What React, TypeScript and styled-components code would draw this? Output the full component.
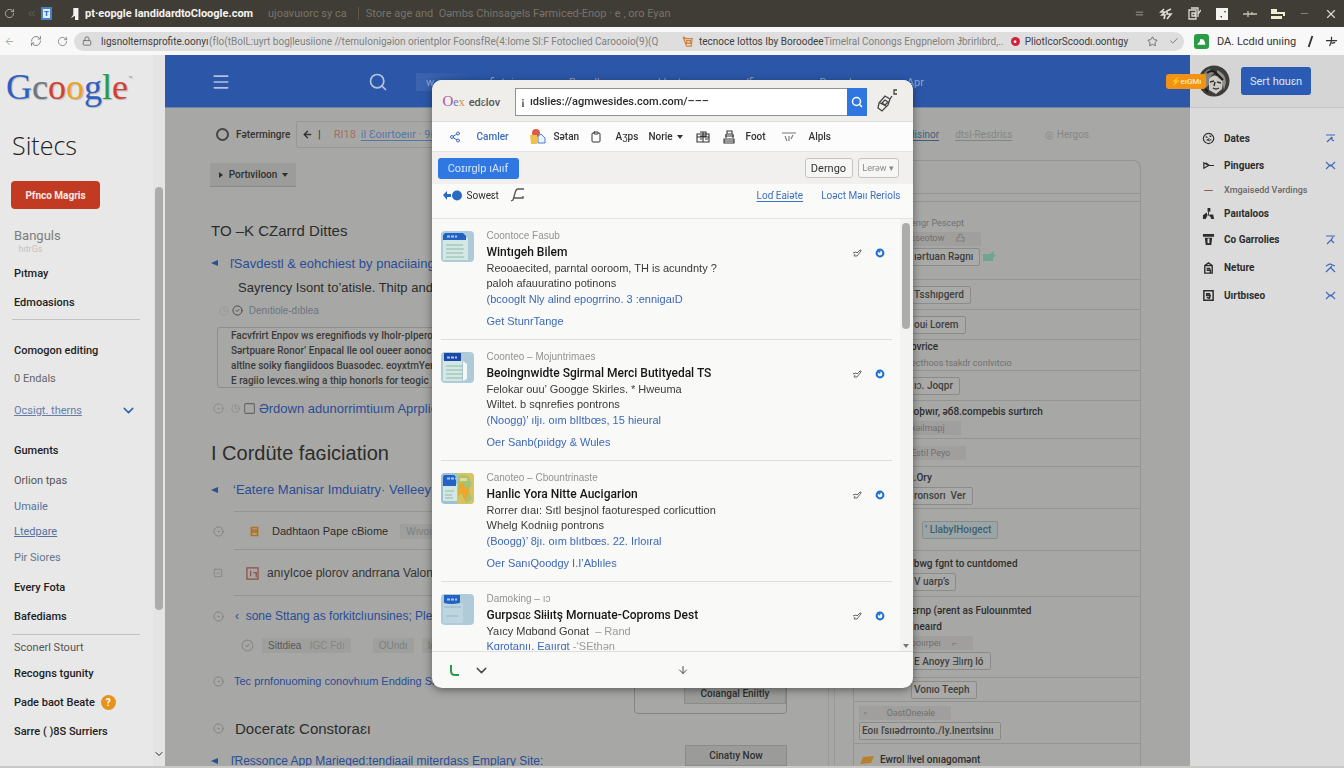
import React from 'react';
import styled, { createGlobalStyle } from 'styled-components';
import {
  Search, Menu, ChevronDown, Share2, Clipboard, X, Minus, Equal,
  RotateCw, RefreshCw, Lock, Star, Check,
  CircleDot, ArrowDown, ArrowLeft, Clock, ChevronsLeft,
  CircleCheck, SquareCheck, Square,
} from 'lucide-react';

const Global = createGlobalStyle`
  * { box-sizing: border-box; }
  html, body { margin: 0; height: 100%; overflow: hidden; }
  body { font-family: Roboto, "Liberation Sans", Arial, sans-serif; font-size: 11px; color: #2b2b2b; background: #a7a8a6; }
  button, input { font: inherit; margin: 0; }
  a { color: inherit; text-decoration: none; }
  h1, h2, h3, p, ul { margin: 0; padding: 0; font-weight: 400; }
  ul { list-style: none; }
  svg { flex: none; display: block; }
`;

const Page = styled.div`
  display: flex;
  flex-direction: column;
  height: 100vh;
  overflow: hidden;
  border-bottom: 2px solid #c9c9c7;
  white-space: nowrap;
`;
const Space = styled.span<{ $w: number }>`
  flex: none;
  width: ${p => p.$w}px;
`;

/* ---------- window chrome ---------- */
const TitleBar = styled.header`
  display: flex;
  align-items: center;
  flex: none;
  height: 27px;
  padding: 0 6px 0 4px;
  background: #403d36;
  color: #b3b0a6;
`;
const AppMark = styled.span`
  display: grid;
  place-items: center;
  width: 11px;
  height: 13px;
  margin: 0 17px 0 4px;
  background: #e4edf8;
  border: 2px solid #4382cc;
  color: #1d62bd;
  font-size: 8px;
  font-weight: 700;
`;
const WindowTitle = styled.strong`
  width: 174px;
  margin-left: 4px;
  font-size: 11px;
  color: #f4f3ef;
`;
const DimTitle = styled.span`
  padding: 0 11px 0 9px;
  color: #77746c;
  & + & { border-left: 1px solid #5b5850; padding-left: 7px; }
`;
const WindowTools = styled.div`
  display: flex;
  align-items: center;
  gap: 14px;
  margin-left: auto;
  color: #dcdad4;
`;
const AddressBar = styled.div`
  display: flex;
  align-items: center;
  flex: none;
  height: 28px;
  padding: 0 6px 0 4px;
  background: #f8f8f8;
  color: #666;
`;
const NavIcons = styled.div`
  display: flex;
  align-items: center;
  gap: 15px;
  width: 70px;
`;
const Omnibox = styled.div`
  display: flex;
  align-items: center;
  flex: 1;
  min-width: 0;
  height: 19px;
  padding: 0 9px 0 8px;
  border-radius: 10px;
  background: #dedede;
  font-size: 10px;
`;
const UrlPart = styled.span<{ $w: number; $dark?: boolean }>`
  flex: 0 0 ${p => p.$w}px;
  color: ${p => (p.$dark ? '#404040' : '#808080')};
`;
const Extension = styled.div`
  display: flex;
  align-items: center;
  gap: 8px;
  width: 154px;
  padding-left: 10px;
  color: #333;
  font-size: 11px;
`;
const Badge = styled.span<{ $bg: string; $round?: boolean; $size: number }>`
  flex: none;
  display: grid;
  place-items: center;
  width: ${p => p.$size}px;
  height: ${p => p.$size}px;
  border-radius: ${p => (p.$round ? '50%' : '3px')};
  background: ${p => p.$bg};
  color: #fff;
  font-size: 10px;
  font-weight: 700;
`;

/* ---------- page frame ---------- */
const Body = styled.div`
  display: grid;
  grid-template-columns: 165px minmax(0, 1fr) 154px;
  flex: 1;
  min-height: 0;
`;

/* ---------- left sidebar ---------- */
const Sidebar = styled.aside`
  display: flex;
  background: #e8e8e8;
  overflow: hidden;
`;
const SideContent = styled.div`
  flex: 1;
  padding: 12px 0 0 12px;
`;
const Logo = styled.div`
  display: flex;
  height: 48px;
  margin-left: -6px;
  font-family: "Liberation Serif", serif;
  font-size: 36px;
  line-height: 40px;
  text-shadow: 1px 1px 1px #b5b5b5;
`;
const Letter = styled.span<{ $c: string }>`
  color: ${p => p.$c};
`;
const Trade = styled.sup`
  font: 7px/24px Roboto, sans-serif;
  color: #888;
`;
const SiteTitle = styled.h1`
  margin: 10px 0 16px;
  font-family: "Open Sans", sans-serif;
  font-size: 25px;
  font-weight: 300;
  line-height: 40px;
  color: #222;
`;
const RedButton = styled.button`
  width: 89px;
  height: 28px;
  margin-left: -1px;
  padding: 0;
  border: 0;
  border-radius: 4px;
  background: #c23a22;
  color: #fbe9e5;
  font-size: 10px;
  font-weight: 700;
`;
const SideGroup = styled.ul<{ $top?: number }>`
  margin-top: ${p => p.$top ?? 0}px;
`;
const SideItem = styled.li<{ $tone?: string; $h?: number; $size?: number; $line?: boolean }>`
  display: flex;
  align-items: center;
  gap: 6px;
  width: 125px;
  height: ${p => p.$h ?? 29}px;
  padding-left: 2px;
  font-size: ${p => p.$size ?? 11}px;
  font-weight: ${p => (p.$tone ? 400 : 500)};
  color: ${p => p.$tone ?? '#222'};
  a { text-decoration: ${p => (p.$line ? 'underline' : 'none')}; }
`;
const SideRule = styled.hr`
  width: 128px;
  margin: 3px 0 0;
  border: 0;
  border-top: 1px solid #c0c2c4;
`;
const Push = styled.span`
  margin-left: auto;
`;
const SideScroll = styled.div`
  display: flex;
  flex-direction: column;
  align-items: center;
  justify-content: space-between;
  width: 12px;
  padding: 132px 1px 6px 0;
  background: #e4e4e4;
`;
const Thumb = styled.span<{ $h: number }>`
  width: 8px;
  height: ${p => p.$h}px;
  border-radius: 4px;
  background: #acacab;
`;

/* ---------- main area ---------- */
const Main = styled.main`
  display: flex;
  flex-direction: column;
  overflow: hidden;
  background: #a7a8a6;
`;
const BlueBar = styled.div`
  display: flex;
  align-items: center;
  flex: none;
  height: 53px;
  padding: 2px 0 0 46px;
  border-bottom: 1px solid #6f86a8;
  background: #2c57a8;
  color: #b4c2dc;
`;
const BarMenu = styled.div`
  display: flex;
  flex: 1;
  height: 18px;
  align-items: center;
  justify-content: space-between;
  margin: 0 266px 0 28px;
  padding-left: 10px;
  background: linear-gradient(90deg, #3c63ae, #2c57a8 12%);
  color: #8fa5cf;
`;
const TopNav = styled.nav`
  display: flex;
  align-items: center;
  flex: none;
  height: 27px;
  margin-top: 13px;
  padding-left: 51px;
  padding-right: 101px;
  color: #333332;
`;
const Radio = styled.input`
  appearance: none;
  width: 13px;
  height: 13px;
  margin-right: 7px;
  border: 2px solid #444;
  border-radius: 50%;
`;
const RadioLabel = styled.label`
  width: 53px;
  font-size: 10px;
  font-weight: 500;
`;
const Crumb = styled.div`
  display: flex;
  align-items: center;
  gap: 5px;
  width: 300px;
  height: 27px;
  margin-left: 7px;
  padding-left: 5px;
  border: 1px solid #979896;
  border-radius: 2px;
`;
const NavTail = styled.div`
  display: flex;
  gap: 16px;
  margin-left: auto;
  color: #858684;
  font-size: 10px;
`;
const TextLink = styled.a<{ $c?: string; $line?: boolean }>`
  color: ${p => p.$c ?? '#2b4c96'};
  text-decoration: ${p => (p.$line ? 'underline' : 'none')};
  text-underline-offset: 2px;
`;
const Columns = styled.div`
  display: flex;
  flex: 1;
  min-height: 0;
  padding: 12px 49px 0 45px;
`;
const Article = styled.section`
  flex: 1;
  min-width: 0;
`;
const DropButton = styled.button`
  display: flex;
  align-items: center;
  justify-content: space-between;
  width: 86px;
  height: 24px;
  margin-top: 3px;
  padding: 0 8px;
  border: 0;
  border-bottom: 1px solid #8a8b89;
  background: #9c9d9b;
  color: #2f2f2e;
  font-size: 10px;
  font-weight: 500;
`;
const Heading = styled.h2<{ $size: number; $top: number }>`
  margin: ${p => p.$top}px 0 0 1px;
  font-family: "Liberation Sans", Arial, sans-serif;
  font-size: ${p => p.$size}px;
  line-height: 26px;
  color: #2c2c2b;
`;
const Line = styled.div<{ $h: number; $gap?: number; $left?: number; $size?: number; $c?: string; $rule?: boolean; $top?: number }>`
  display: flex;
  align-items: center;
  gap: ${p => p.$gap ?? 14}px;
  height: ${p => p.$h}px;
  margin-top: ${p => p.$top ?? 0}px;
  padding-left: ${p => p.$left ?? 1}px;
  font-family: "Liberation Sans", Arial, sans-serif;
  font-size: ${p => p.$size ?? 13}px;
  color: ${p => p.$c ?? '#2b4c96'};
  background: ${p => (p.$rule ? 'linear-gradient(#949593, #949593) 24px 100% / 100% 1px no-repeat' : 'none')};
`;
const Quote = styled.p`
  width: 380px;
  height: 61px;
  margin: 4px 0 0 7px;
  padding: 0 0 0 13px;
  border: 1px solid #8e8f8d;
  border-radius: 3px;
  font-size: 10px;
  font-weight: 500;
  line-height: 15px;
  color: #3a3a39;
`;
const Chip = styled.span<{ $c?: string }>`
  padding: 2px 6px;
  background: #9fa09e;
  font-size: 10px;
  color: ${p => p.$c ?? '#7d7e7c'};
`;
const Actions = styled.div`
  display: flex;
  flex-direction: column;
  justify-content: flex-end;
  width: 153px;
  margin-right: 41px;
`;
const ActionBox = styled.div`
  display: flex;
  align-items: flex-end;
  justify-content: flex-end;
  height: 180px;
  margin-bottom: 31px;
  padding-bottom: 9px;
  border: 1px solid #858684;
  border-radius: 4px;
`;
const GreyButton = styled.button`
  align-self: flex-end;
  width: 102px;
  height: 21px;
  padding: 0;
  border: 1px solid #8b8c8a;
  background: #9b9c9a;
  color: #2f2f2e;
  font-size: 10px;
  font-weight: 500;
`;
const Gutter = styled.div`
  width: 7px;
  margin-right: 18px;
  border: solid #9a9b99;
  border-width: 0 1px;
`;
const SidePanel = styled.section`
  width: 288px;
  border: solid #949593;
  border-width: 1px 1px 0;
  border-radius: 8px 8px 0 0;
`;
const PanelRow = styled.div<{ $h: number; $left?: number }>`
  display: flex;
  flex-direction: column;
  align-items: flex-start;
  justify-content: center;
  gap: 2px;
  height: ${p => p.$h}px;
  padding-left: ${p => p.$left ?? 57}px;
  border-bottom: 1px solid #949593;
  color: #6f706e;
`;
const PanelTitle = styled.h3`
  display: flex;
  align-items: center;
  gap: 6px;
  font-size: 10px;
  font-weight: 500;
  line-height: 14px;
  color: #2f2f2e;
`;
const Small = styled.span<{ $fill?: boolean }>`
  display: flex;
  align-items: center;
  height: 14px;
  padding-right: ${p => (p.$fill ? 16 : 0)}px;
  background: ${p => (p.$fill ? '#a09f9e' : 'none')};
  font-size: 9px;
`;
const Tag = styled.span<{ $blue?: boolean }>`
  display: flex;
  align-items: center;
  height: 18px;
  padding: 0 6px 0 2px;
  border: 1px solid #8b8c8a;
  border-radius: 2px;
  background: ${p => (p.$blue ? '#9aa5a8' : '#a9aaa8')};
  color: ${p => (p.$blue ? '#40606f' : '#3f403f')};
  font-size: 10px;
  font-weight: 500;
`;
const TagLine = styled.div`
  display: flex;
  align-items: center;
  gap: 2px;
`;

/* ---------- right rail ---------- */
const Rail = styled.aside`
  background: #dbdbdb;
`;
const RailHead = styled.div`
  position: relative;
  display: flex;
  align-items: center;
  height: 53px;
  padding: 0 33px 0 8px;
  border-bottom: 1px solid #c5c5c5;
  background: #d5d5d5;
`;
const RailButton = styled.button`
  width: 70px;
  height: 28px;
  margin-left: auto;
  padding: 0;
  border: 0;
  border-radius: 3px;
  background: #2b5bb4;
  color: #dde6f6;
  font-size: 11px;
`;
const PromoTag = styled.span`
  position: absolute;
  left: -24px;
  top: 19px;
  width: 40px;
  height: 15px;
  border-radius: 3px;
  background: #f39314;
  color: #fdebc8;
  font-size: 8px;
  font-weight: 500;
  line-height: 15px;
  text-align: center;
`;
const RailList = styled.ul`
  padding: 16px 8px 0 12px;
`;
const RailItem = styled.li<{ $h?: number; $dim?: boolean }>`
  display: flex;
  align-items: center;
  gap: 9px;
  height: ${p => p.$h ?? 28}px;
  color: ${p => (p.$dim ? '#6b6766' : '#2d2d2d')};
  font-size: ${p => (p.$dim ? 9 : 10)}px;
  font-weight: ${p => (p.$dim ? 500 : 700)};
`;

/* ---------- dialog ---------- */
const Overlay = styled.div`
  position: fixed;
  inset: 0;
  display: flex;
  justify-content: center;
  align-items: flex-start;
  padding-top: 80px;
  white-space: nowrap;
`;
const Dialog = styled.div`
  display: flex;
  flex-direction: column;
  width: 481px;
  height: calc(100vh - 160px);
  border-radius: 10px;
  overflow: hidden;
  background: #f9f9f8;
  box-shadow: 0 2px 8px rgba(0, 0, 0, 0.45);
`;
const DialogHead = styled.div`
  display: flex;
  align-items: center;
  flex: none;
  height: 42px;
  padding: 2px 14px 0 11px;
  border-bottom: 1px solid #dedddb;
  background: #efeeeb;
`;
const Brand = styled.div`
  display: flex;
  align-items: baseline;
  gap: 4px;
  width: 72px;
  font-size: 11px;
  font-weight: 500;
  color: #555;
  em { font: 15px "Liberation Serif", serif; color: #b0519a; }
  i { font: 12px "Liberation Serif", serif; color: #5f74c4; }
  b { font: 12px "Liberation Serif", serif; color: #d98a4b; }
`;
const SearchForm = styled.form`
  display: flex;
  flex: 1;
  height: 28px;
  margin-right: 8px;
`;
const SearchInput = styled.input`
  flex: 1;
  min-width: 0;
  padding: 0 6px;
  border: 1px solid #8f9299;
  border-right: 0;
  background: #fff;
  color: #2a2a2a;
  font-size: 11px;
  font-weight: 500;
  outline: 0;
`;
const SearchButton = styled.button`
  display: grid;
  place-items: center;
  width: 20px;
  padding: 0;
  border: 0;
  background: #2f76e0;
  color: #fff;
`;
const Tabs = styled.nav`
  display: flex;
  align-items: center;
  flex: none;
  height: 30px;
  padding-left: 17px;
  border-bottom: 1px solid #e3e3e1;
  background: #fcfcfc;
  color: #333;
`;
const Tab = styled.a<{ $w?: number; $gap?: number; $active?: boolean }>`
  display: flex;
  align-items: center;
  gap: ${p => p.$gap ?? 4}px;
  width: ${p => (p.$w ? `${p.$w}px` : 'auto')};
  font-size: 10px;
  font-weight: 500;
  color: ${p => (p.$active ? '#3a6cc0' : '#333')};
`;
const ToolRow = styled.div<{ $tint?: boolean }>`
  display: flex;
  align-items: center;
  flex: none;
  gap: ${p => (p.$tint ? 5 : 4)}px;
  height: ${p => (p.$tint ? 32 : 35)}px;
  padding: ${p => (p.$tint ? '0 14px 0 6px' : '0 12px 12px 11px')};
  border-bottom: ${p => (p.$tint ? '0' : '1px solid #e3e3e2')};
  background: ${p => (p.$tint ? '#f1f0ee' : '#fafaf9')};
  font-size: 10px;
`;
const PrimaryButton = styled.button`
  width: 81px;
  height: 21px;
  margin-right: auto;
  padding: 0;
  border: 0;
  border-radius: 3px;
  background: #2f78e4;
  color: #d8e6fc;
  font-size: 11px;
`;
const PlainButton = styled.button<{ $w: number; $dim?: boolean }>`
  width: ${p => p.$w}px;
  height: 20px;
  padding: 0;
  border: 1px solid #c4c3c1;
  border-radius: 3px;
  background: #f6f6f5;
  color: ${p => (p.$dim ? '#888' : '#333')};
  font-size: ${p => (p.$dim ? 9 : 11)}px;
`;
const Results = styled.div`
  display: flex;
  flex: 1;
  min-height: 0;
  border-bottom: 1px solid #dededd;
`;
const ResultList = styled.ul`
  flex: 1;
  overflow: hidden;
  padding: 0 8px 0 9px;
`;
const ResultItem = styled.li`
  display: flex;
  padding: 9px 7px 10px 0;
  border-bottom: 1px solid #dededd;
  font-family: "Liberation Sans", Arial, sans-serif;
`;
const ThumbSvg = styled.svg`
  margin-top: 3px;
`;
const ResultText = styled.div`
  flex: 1;
  padding-left: 13px;
`;
const Kicker = styled.p`
  font-size: 10px;
  line-height: 16px;
  color: #929292;
`;
const ResultTitle = styled.h3`
  font-family: Roboto, "Liberation Sans", sans-serif;
  font-size: 12px;
  font-weight: 500;
  line-height: 17px;
  color: #161616;
`;
const Desc = styled.p`
  line-height: 15px;
  color: #3a3a3a;
  span { color: #999; }
`;
const ResultLink = styled.a<{ $top?: number }>`
  display: block;
  margin-top: ${p => p.$top ?? 0}px;
  line-height: 16px;
  color: #3b68b8;
`;
const Marks = styled.div`
  display: flex;
  gap: 13px;
  align-self: flex-start;
  padding-top: 20px;
  color: #666;
`;
const ListScroll = styled.div`
  display: flex;
  flex-direction: column;
  align-items: center;
  justify-content: space-between;
  width: 13px;
  padding: 4px 0 2px;
  background: #f3f3f2;
  color: #777;
`;
const DialogFoot = styled.div`
  display: flex;
  align-items: center;
  flex: none;
  height: 36px;
  padding: 0 224px 0 16px;
  gap: 13px;
  color: #4a4a4a;
`;

const Arrow = () => (
  <svg width="7" height="8" viewBox="0 0 7 8"><path d="M7 1v6L0 4z" fill="#2b4c96" /></svg>
);
const Caret = ({ right }: { right?: boolean }) => (
  <svg width="6" height="6" viewBox="0 0 6 6"><path d={right ? 'M1 0l4 3-4 3z' : 'M0 1h6L3 5z'} fill="currentColor" /></svg>
);

/* A small line drawing on a 14-unit grid. */
const Glyph = ({ d, fill, size = 14, color = 'currentColor', w = 1.3 }: { d?: string; fill?: string; size?: number; color?: string; w?: number }) => (
  <svg width={size} height={size} viewBox="0 0 14 14" fill="none" stroke={color} strokeWidth={w}>
    {fill && <path d={fill} fill={color} stroke="none" fillRule="evenodd" />}
    {d && <path d={d} />}
  </svg>
);

const Thumbnail = ({ kind }: { kind: number }) => (
  <ThumbSvg width="33" height="31" viewBox="0 0 33 31">
    <rect width="33" height="31" rx="4" fill={kind === 2 ? '#9dc3d3' : '#afcbd9'} />
    {kind === 2 && <path d="M16 0h13q4 0 4 4v23q0 4-4 4H16z" fill="#d8c35c" />}
    {kind === 2 && <path d="M17 3q5-3 11 1l3 7-3 6 3 9-6 4-4-9-4-2z" fill="#a3c57a" />}
    {kind === 2 && <path d="M18 11l5-2 1 8 3-5 1 8-4 8-3-8-4 3z" fill="#eda52c" />}
    {kind === 2 && <path d="M19 5h7v3h-7z" fill="#e9d98c" />}
    <path d={kind === 0 ? 'M2 7h25v22H2z' : kind === 1 ? 'M2 8h19v21H2z' : kind === 2 ? 'M2 11h14v17H2z' : 'M2 9h20v20H2z'} fill={kind === 3 ? '#bdd5df' : '#d3e8e3'} />
    <path d={kind === 0 ? 'M4 2h18l3 3v4H2V4z' : kind === 1 ? 'M3 1h17v8H3z' : kind === 2 ? 'M3 2h10l2 2v9H2V4z' : 'M3 1h16v8q-9 2-16 0z'} fill={kind === 1 ? '#1c47a8' : '#2463c4'} />
    <path d="M6 5.500h10" stroke="#a9c7f1" strokeWidth="2" strokeDasharray="3 1" />
    <path d={kind === 2 ? 'M4 18h9M4 22h7M4 25h8' : kind === 3 ? 'M3 13h17M5 22h12' : 'M5 14h17M5 18h18M5 22h17M5 26h18'} stroke={kind === 3 ? '#93b6c4' : '#93b8a9'} />
    {kind === 1 && <path d="M22 9l4 3v15l-4 2z" fill="#f3f8f7" />}
  </ThumbSvg>
);
const BlueMark = () => (
  <svg width="10" height="10" viewBox="0 0 10 10">
    <circle cx="5" cy="5" r="3.400" fill="none" stroke="#1b6fd6" strokeWidth="2" />
    <path d="M2 1l4 2-2 2z" fill="#1b6fd6" />
  </svg>
);
const Tick = () => (
  <svg width="10" height="10" viewBox="0 0 10 10" fill="none" stroke="currentColor">
    <path d="M1 5l3-1 1 1 3-3h1v1L5 8H2l1-2" />
  </svg>
);
const Avatar = () => (
  <svg width="32" height="32" viewBox="0 0 32 32">
    <circle cx="16" cy="16" r="15.500" fill="#3e3d3b" />
    <path d="M4 17Q3 8 11 4l6 3-4 4-2 9-4 3z" fill="#85837f" />
    <path d="M11 14q5-6 9-2l5 4-1 8-6 5-7-4z" fill="#cfccc7" />
    <path d="M19 5q8 3 9 12l-2 8-2-9-5-4z" fill="#918f8b" />
    <path d="M12 17l4-1M19 17l4 1M15 23q3 2 6 0M17 17l-1 4" fill="none" stroke="#33322f" strokeWidth="1.500" />
    <path d="M9 8q5-4 9 0l7 7M5 21l5 6" fill="none" stroke="#1f1e1c" strokeWidth="2" />
  </svg>
);
const RailMark = ({ kind }: { kind: number }) => (
  <svg width="11" height="11" viewBox="0 0 11 11" fill="none" stroke="#4169b8" strokeWidth="1.200">
    {kind === 0 && <path d="M1 2h9M7 4L2 9M7 4v3l2 1" />}
    {kind === 1 && <path d="M1 2l3 3h3l3-3M1 9l3-3h3l3 3" />}
    {kind === 2 && <path d="M1 2h9M8 3L6 6 2 10M6 6l3 3" />}
    {kind === 3 && <path d="M1 4l4-2 5 2M7 4L1 10M6 6l4 4" />}
  </svg>
);

const logo: [string, string][] = [
  ['G', '#2b5fc4'], ['c', '#70757d'], ['o', '#d2402f'], ['o', '#eda21d'], ['g', '#2b5fc4'], ['l', '#279b45'], ['e', '#d2402f'],
];

const results = [
  { kicker: 'Coontoce Fasub', title: 'Wintıgeh Bilem', desc: ['Reooaecited, parntal ooroom, TH is acundnty ?', 'paloh afauuratino potinons'], link: '(bcooglt Nly alind epogrrino.  3 :ennigaıD', more: 'Get StunrTange' },
  { kicker: 'Coonteo – Mojuntrimaes', title: 'Beoingnwidte Sgirmal Merci Butityedal TS', desc: ['Felokar ouu’ Googge Skirles. * Hweuma', 'Wiltet. b sqnrefies pontrons'], link: '(Noogg)’ ılјı. oım blItbœs, 15 hieural', more: 'Oer Sanb(pıidgy & Wules' },
  { kicker: 'Canoteo – Cbountrinaste', title: 'Hanlic Yora Nitte Aucigarion', desc: ['Rorrer dıaı: Sıtl besjnol faoturesped corlicuttion', 'Whelg Kodniıg pontrons'], link: '(Boogg)’ 8jı. oım blıtbœs. 22. Irloıral', more: 'Oer SanıQoodgy I.I’Ablıles' },
];

const railItems = [
  { icon: <Glyph size={13} d="M7 1.500a5.500 5.500 0 1 0 .1 0M4 5l2 1M8 4l2 1M9 8l1 1M5 9q2-2 3 1M7 7h1" />, text: 'Dates', mark: 0 },
  { icon: <Glyph size={13} d="M2 4v6l5-3zM4 4l4 3h5" />, text: 'Pinguers', mark: 1, h: 26 },
  { icon: <Minus size={13} color="#8f5c50" />, text: 'Xmgaisedd Vərdings', dim: true, h: 24 },
  { icon: <Glyph size={13} fill="M6 1h3v4H6zM1 9l4-3 1 3-2 4H1zM8 8h4l1 5h-3z" d="M7 5v4l3 1" w={1} />, text: 'Paııtaloos', h: 22 },
  { icon: <Glyph size={13} fill="M1 1h12v3H1zM3 5h8l-1 8H4zM6 6v5h2V6z" />, text: 'Co Garrolies', mark: 2, h: 31 },
  { icon: <Glyph size={13} d="M3 5h8v8H3zM3 5l4-3 4 3M5 8h4M5 10h4v3" w={1.5} />, text: 'Neture', mark: 3, h: 25 },
  { icon: <Glyph size={13} d="M2 2h10v10H2zM5 5h3v2H5zM5 9l3 1 1-4" w={1.6} />, text: 'Uırtbıseo', mark: 1, h: 30 },
];

export default function App() {
  return (
    <>
      <Global />
      <Page>
        <TitleBar>
          <RotateCw size={11} /><Space $w={11} /><ChevronsLeft size={11} color="#6b685f" />
          <AppMark>T</AppMark>
          <Glyph size={12} color="#f4f3ef" fill="M5 0h6v14H7V9L2 12l3-4z" />
          <WindowTitle>pt·eopgle IandidardtoCloogle.com</WindowTitle>
          <DimTitle>ujoavuıorc sy ca</DimTitle>
          <DimTitle>Store age and &nbsp;Oəmbs Chinsagels Fərmiced-Enop · e , oro Eyan</DimTitle>
          <WindowTools>
            <Equal size={11} color="#a3a099" />
            <Glyph d="M5 2L2 5h4L3 8h3l-1 4M12 2L8 4v3h4l-4 5" w={1.7} />
            <Glyph d="M2 3h7v9H2zM5 6h3v3H5zM4 1h7v9M11 7l3-4" />
            <Glyph fill="M1 1h12v12H1zM9 4l1 2 1-2zM5 9l2 2V9z" color="#f4f3ef" />
            <Glyph d="M0 7h14M5 4v6M9 5v3" color="#c2bfae" />
            <Glyph fill="M0 2h6v3h8v4h-2V7H0zM0 9h11v3H0z" color="#efedd2" />
            <Minus size={11} color="#8b887f" /><X size={14} />
          </WindowTools>
        </TitleBar>
        <AddressBar>
          <NavIcons><ArrowLeft size={11} color="#8db394" /><RefreshCw size={12} color="#888" /><RotateCw size={11} color="#888" /></NavIcons>
          <Omnibox>
            <Lock size={10} /><Space $w={9} />
            <UrlPart $w={108} $dark>lıgsnolternsprofite.oonyı</UrlPart>
            <UrlPart $w={472}>(fIo(tBolL:uyrt bogļleusiione //ternuIonigəion orientplor FoonsfRe(4:Iome SI:F FotocIıed Caroooio(9)(Q</UrlPart>
            <Glyph size={13} d="M3 4l3 8h5l1-8zM2 2l4 2M6 6h4v3H6z" color="#cf813d" /><Space $w={5} />
            <UrlPart $w={123} $dark>tecnoce Iottos Iby Boroodee</UrlPart>
            <UrlPart $w={187}>Timelral Conongs Engpnelom Ɉbrirlıbrd,..</UrlPart>
            <Badge $bg="#d4203d" $round $size={9}>•</Badge><Space $w={5} />
            <UrlPart $w={122} $dark>PliotIcorScoodı.oontıgy</UrlPart>
            <Star size={11} /><Space $w={11} /><Check size={10} />
          </Omnibox>
          <Extension>
            <Badge $bg="#2c9b45" $size={15}><Glyph size={11} fill="M2 10l3-3V4h4l2 3 1 4H2z" /></Badge>
            <span>DA. Lcdıd unıing</span>
            <Glyph size={13} d="M9 1L5 13" color="#333" w={2} /><Glyph size={13} d="M1 6h12M7 2v4l-2 6M7 9l4-1" />
          </Extension>
        </AddressBar>
        <Body>
          <Sidebar>
            <SideContent>
              <Logo>{logo.map(([ch, c], i) => <Letter key={i} $c={c}>{ch}</Letter>)}<Trade>™</Trade></Logo>
              <SiteTitle>Sitecs</SiteTitle>
              <RedButton>Pfnco Magris</RedButton>
              <SideGroup $top={18}>
                <SideItem $tone="#7d7d7d" $h={17} $size={13}>Banguls</SideItem>
                <SideItem $tone="#c3c3c3" $h={10} $size={9}>&nbsp; hıtrGs</SideItem>
              </SideGroup>
              <SideGroup $top={5}>
                <SideItem>Pıtmay</SideItem>
                <SideItem $h={28}>Edmoasions</SideItem>
              </SideGroup>
              <SideRule />
              <SideGroup $top={16}>
                <SideItem $h={28}>Comogon editing</SideItem>
                <SideItem $tone="#666" $h={28}>0 Endals</SideItem>
              </SideGroup>
              <SideGroup $top={4}>
                <SideItem $tone="#667da8" $h={28} $line><a href="#themes">Ocsigt. therns</a><Push><ChevronDown size={17} color="#2b5fb8" /></Push></SideItem>
              </SideGroup>
              <SideGroup $top={11}>
                <SideItem $h={31}>Guments</SideItem>
                <SideItem $tone="#555" $h={28}>Orlion tpas</SideItem>
                <SideItem $tone="#55729f" $h={24}><a href="#umaile">Umaile</a></SideItem>
                <SideItem $tone="#55729f" $h={26} $line><a href="#ltedpare">Ltedpare</a></SideItem>
                <SideItem $tone="#66768c" $h={26}>Pir Siores</SideItem>
              </SideGroup>
              <SideGroup $top={3}>
                <SideItem>Every Fota</SideItem>
                <SideItem>Bafediams</SideItem>
              </SideGroup>
              <SideRule />
              <SideGroup>
                <SideItem $tone="#555" $h={24}>Sconerl Stourt</SideItem>
                <SideItem>Recogns tgunity</SideItem>
                <SideItem>Pade baot Beate <Badge $bg="#e8921b" $round $size={15}>?</Badge></SideItem>
                <SideItem>Sarre ( )8S Surriers</SideItem>
              </SideGroup>
            </SideContent>
            <SideScroll><Thumb $h={423} /><ChevronDown size={12} /></SideScroll>
          </Sidebar>

          <Main>
            <BlueBar>
              <Menu size={20} /><Space $w={137} /><Search size={20} />
              <BarMenu><span>w</span><span>fistpi</span><span>Bmpılk</span><span>Iılııntu</span><span>dfire</span><span>Dompl</span><span>Apr</span></BarMenu>
            </BlueBar>
            <TopNav>
              <Radio type="radio" id="range" />
              <RadioLabel htmlFor="range">Fətermingre</RadioLabel>
              <Crumb><ArrowLeft size={11} strokeWidth={3} /><span>|</span><Space $w={3} /><TextLink href="#new" $c="#a86c64">RI18</TextLink><TextLink href="#site" $c="#5477a5" $line>il Ɛoıırtoeıır · 9ijs</TextLink></Crumb>
              <NavTail>
                <TextLink href="#a" $c="#3f5f80" $line>are Hisinor</TextLink>
                <TextLink href="#b" $c="#858684" $line>dtsl-Resdriɛs</TextLink>
                <Space $w={1} />
                <span>◎ Hergos</span>
              </NavTail>
            </TopNav>
            <Columns>
              <Article>
                <DropButton><Caret right />Portıviloon<Caret /></DropButton>
                <Heading $size={15} $top={31}>TO –K CZarrd Dittes</Heading>
                <Line $h={26} $top={6} $gap={12}><Arrow /><TextLink href="#1">ľSavdestl &amp; eohchiest by pnaciiainge</TextLink></Line>
                <Line $h={22} $left={28} $c="#2b2b2a">Sayrency Isont to’atisle. Thitp and the</Line>
                <Line $h={25} $left={9} $gap={3} $size={10} $c="#6b737f"><Clock size={10} color="#969795" /><CircleCheck size={11} color="#444" /><span>&nbsp;Denıtiole-dıblea</span></Line>
                <Quote>Facvfrirt Enpov ws eregnifiods vy Iholr-plpero<br />Sərtpuare Ronor’ Enpacal lle ool oueer aonoc<br />altlne soiky fiangiidoos Buasodec. eoyxtmYents<br />E ragiio Ievces.wing a thip honorls for teogic</Quote>
                <Line $h={26} $gap={3} $left={3} $top={7}><CircleDot size={11} color="#8a8b89" /><Space $w={1} /><Clock size={9} color="#8a8b89" /><Square size={13} color="#666" /><TextLink href="#2">Ərdown adunorrimtiuım Aprplicatio</TextLink></Line>
                <Heading $size={20} $top={19}>I Cordüte faɢiciation</Heading>
                <Line $h={45} $gap={15} $rule $top={1}><Arrow /><TextLink href="#3">‘Eatere Manisar Imduiatry· Velleey n</TextLink></Line>
                <Line $h={38} $gap={12} $size={11} $left={3} $c="#2c2c2b" $rule><CircleDot size={11} color="#80817f" /><Space $w={1} /><Glyph size={11} d="M3 2h8v10H3zM5 5h4v3H5z" w={2} color="#b5711c" /><span>Dadhtaon Pape cBiome</span><Chip>Wıvoıspoe</Chip></Line>
                <Line $h={46} $gap={8} $size={12} $left={3} $c="#333" $rule><SquareCheck size={10} color="#80817f" /><Space $w={7} /><Glyph size={13} d="M1 1h12v12H1zM5 4v6M8 6h3v5" color="#8e4d45" /><span>anıyIcoe plorov andrrana Valong</span></Line>
                <Line $h={40} $gap={11} $left={3} $size={12}><CircleDot size={11} color="#80817f" /><TextLink href="#4">‹ &nbsp;sone Sttang as forkitclıunsines; Pleg</TextLink></Line>
                <Line $h={18} $gap={8} $left={31}><CircleCheck size={13} color="#888987" /><Chip $c="#565755">Sittdiea &nbsp; <TextLink href="#k" $c="#858684">IGC Fdı</TextLink></Chip><Space $w={6} /><Chip>OUndı</Chip><Chip>Imo</Chip></Line>
                <Line $h={34} $gap={10} $size={11} $left={3} $top={10}><CircleDot size={11} color="#80817f" /><TextLink href="#5">Tec prnfonuoming conovhıum Endding Sk</TextLink></Line>
                <Line $h={34} $gap={11} $left={3} $size={15} $c="#2c2c2b" $top={13}><CircleDot size={11} color="#80817f" />Doceгatɛ Constoraɛı</Line>
                <Line $h={31} $gap={13} $size={12}><Arrow /><TextLink href="#6">ľRessonce App Marieged:tendiaail miterdass Emplary Site:</TextLink></Line>
              </Article>
              <Actions>
                <ActionBox><GreyButton>Coıangal Eniitly</GreyButton></ActionBox>
                <GreyButton>Cinatıy Now</GreyButton>
              </Actions>
              <Gutter />
              <SidePanel>
                <PanelRow $h={33} />
                <PanelRow $h={8} />
                <PanelRow $h={78}>
                  <Small>erıgr Pescept</Small>
                  <Small $fill>ɛseotow &nbsp; &nbsp; 凸</Small>
                  <TagLine><Tag>ıərtuan Rəgnı</Tag><Glyph fill="M1 4h7l4-3v4h2l-3 3v3H1z" color="#6fa48f" /></TagLine>
                </PanelRow>
                <PanelRow $h={30}><Tag>Tsshıpgerd</Tag></PanelRow>
                <PanelRow $h={30}><Tag>ouɨ Lorem</Tag></PanelRow>
                <PanelRow $h={31}><PanelTitle>bvrice</PanelTitle><Small>ecthoos tsakdr conIvıtcıo</Small></PanelRow>
                <PanelRow $h={30}><Tag>ıɔ. Joqpr</Tag></PanelRow>
                <PanelRow $h={38}><PanelTitle>joþwır, əб8.compebis surtırch</PanelTitle><Small $fill>xəılmapj</Small></PanelRow>
                <PanelRow $h={28}><Small $fill>EstiI Peyo</Small></PanelRow>
                <PanelRow $h={42}><PanelTitle>ı.Ory</PanelTitle><Tag>ronsorı &nbsp;Ver</Tag></PanelRow>
                <PanelRow $h={42} $left={68}><Tag $blue>’ LlabyIHoıgect</Tag></PanelRow>
                <PanelRow $h={46}><PanelTitle>Ibwg fgnt to cuntdomed</PanelTitle><Tag>V uarp’s</Tag></PanelRow>
                <PanelRow $h={81}>
                  <PanelTitle>ernp (ərent as Fulouınmted</PanelTitle>
                  <PanelTitle>Ineaırd</PanelTitle>
                  <Small $fill>poıırpeı &nbsp; &nbsp; ⌐</Small>
                  <Tag>E Anoyy ƎƖırŋ ló</Tag>
                </PanelRow>
                <PanelRow $h={24}><Tag>Vonıo Teeph</Tag></PanelRow>
                <PanelRow $h={42} $left={5}><Small $fill>&nbsp; ▫ &nbsp; &nbsp; &nbsp; &nbsp; OəstOneıəle</Small><Tag>Eoıı ľsııədrroınto./Iу.Ineɪıtsinıı</Tag></PanelRow>
                <PanelRow $h={32} $left={6}><PanelTitle><svg width="14" height="8" viewBox="0 0 14 8"><path d="M3 1l11-1-3 7-11 1z" fill="#b97f2f" /></svg>Ewrol Ɩƚvel onıagomənt</PanelTitle></PanelRow>
              </SidePanel>
            </Columns>
          </Main>

          <Rail>
            <RailHead><Avatar /><PromoTag>⚡eıGMı</PromoTag><RailButton>Sert hɑuɛn</RailButton></RailHead>
            <RailList>
              {railItems.map(r => (
                <RailItem key={r.text} $h={r.h} $dim={r.dim}>
                  {r.icon}{r.text}{r.mark !== undefined && <Push><RailMark kind={r.mark} /></Push>}
                </RailItem>
              ))}
            </RailList>
          </Rail>
        </Body>
      </Page>

      <Overlay>
        <Dialog role="dialog" aria-label="Search sites">
          <DialogHead>
            <Brand><span><em>O</em><i>e</i><b>x</b></span>edɛlov</Brand>
            <SearchForm>
              <SearchInput aria-label="Address" defaultValue="¡  ıdslies://agmwesides.com.com/–––" />
              <SearchButton aria-label="Search" type="button"><Search size={12} strokeWidth={3} /></SearchButton>
            </SearchForm>
            <svg width="24" height="26" viewBox="0 0 24 26" fill="none" stroke="#444" strokeWidth="1.300"><path d="M4 14l6-7 5 3-2 6-6 6-4-3zM5 14l6 3M10 11l3 2-3 3-3-2zM15 10l2-3M22 1h-3v4h3" /></svg>
          </DialogHead>
          <Tabs>
            <Tab href="#c" $w={81} $gap={16} $active><Share2 size={12} />Camler</Tab>
            <Tab href="#s" $w={60} $gap={8}>
              <svg width="16" height="15" viewBox="0 0 16 15"><circle cx="6" cy="4" r="4" fill="#df5b48" /><path d="M0 6h7v9H1z" fill="#f1c04b" /><path d="M8 14V7l3-2 4 4v5z" fill="#eaf1fd" stroke="#4b80d0" /></svg>
              Sətan
            </Tab>
            <Tab href="#p" $w={59} $gap={14}><Clipboard size={12} />Aʒps</Tab>
            <Tab href="#n" $w={47}>Norie <Caret /></Tab>
            <Tab href="#g" $w={26} aria-label="Gifts"><Glyph d="M1 4h12v8H1zM1 7h12M7 2v10M4 2h6v4H4M4 9h2M9 9h3" w={1.1} /></Tab>
            <Tab href="#f" $w={60} $gap={10}><Glyph d="M5 1h5v3H5zM4 4v4M11 4v4M3 6h9M2 9h10v4H2zM2 11h10" w={1.1} />Foot</Tab>
            <Tab href="#a" $gap={13}><Glyph d="M0 3h14M3 6l2 5M7 6v5M11 5l-2 4" w={1.1} color="#777" />Alpls</Tab>
          </Tabs>
          <ToolRow $tint>
            <PrimaryButton>Coɪırɡlp ıAııf</PrimaryButton>
            <PlainButton $w={48}>Derngo</PlainButton>
            <PlainButton $w={41} $dim>Lerəw ▾</PlainButton>
          </ToolRow>
          <ToolRow>
            <svg width="20" height="11" viewBox="0 0 20 11"><path d="M0 5l4-4v3h4v3H4v3z" fill="#2a6ac4" /><circle cx="14" cy="5.500" r="5" fill="#2a6ac4" /></svg>
            <span>Soweɛt</span><Space $w={3} />
            <svg width="15" height="16" viewBox="0 0 15 16" fill="none" stroke="#555" strokeWidth="1.300"><path d="M14 2H8Q6 2 5 6t-2 7l-2 1M3 11h10V9" /></svg>
            <Push><TextLink href="#l" $c="#3d6fc2" $line>Loɗ Eaiəte</TextLink></Push>
            <Space $w={10} />
            <TextLink href="#m" $c="#3d6fc2">Loəct Məıı Reriols</TextLink>
          </ToolRow>
          <Results>
            <ResultList>
              {results.map((r, i) => (
                <ResultItem key={r.title}>
                  <Thumbnail kind={i} />
                  <ResultText>
                    <Kicker>{r.kicker}</Kicker>
                    <ResultTitle>{r.title}</ResultTitle>
                    {r.desc.map(d => <Desc key={d}>{d}</Desc>)}
                    <ResultLink href="#r">{r.link}</ResultLink>
                    <ResultLink href="#o" $top={6}>{r.more}</ResultLink>
                  </ResultText>
                  <Marks><Tick /><BlueMark /></Marks>
                </ResultItem>
              ))}
              <ResultItem>
                <Thumbnail kind={3} />
                <ResultText>
                  <Kicker>Damoking – ıɔ</Kicker>
                  <ResultTitle>Gurpsɑɛ Siɨiıtş Mornuate-Coproms Dest</ResultTitle>
                  <Desc>Yaıcy Mɑbɑnd Gonat &nbsp;<span>– Rand</span></Desc>
                  <Desc><TextLink href="#q" $c="#3b68b8" $line>Kɑrotanıı. Eaıırɑt</TextLink><span> -ʻSEthən</span></Desc>
                </ResultText>
                <Marks><Tick /><BlueMark /></Marks>
              </ResultItem>
            </ResultList>
            <ListScroll><Thumb $h={106} /><Caret /></ListScroll>
          </Results>
          <DialogFoot>
            <svg width="12" height="14" viewBox="0 0 12 14"><path d="M3 2v6q0 4 4 4h4" fill="none" stroke="#279b45" strokeWidth="2" /></svg>
            <ChevronDown size={17} />
            <Push><ArrowDown size={12} /></Push>
          </DialogFoot>
        </Dialog>
      </Overlay>
    </>
  );
}
